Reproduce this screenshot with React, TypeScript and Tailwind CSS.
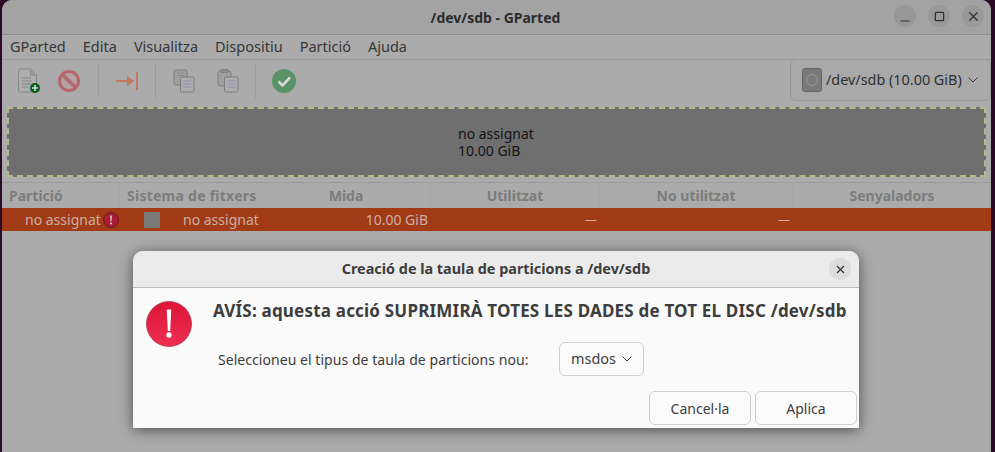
import { Minus, Square, X } from 'lucide-react'

const menus = ['GParted', 'Edita', 'Visualitza', 'Dispositiu', 'Partició', 'Ajuda']

function Chevron({ width = 10, height = 5 }: { width?: number; height?: number }) {
  return (
    <svg width={width} height={height + 1} viewBox={`0 0 ${width} ${height + 1}`} fill="none" className="shrink-0">
      <path d={`M0.5 0.5L${width / 2} ${height}L${width - 0.5} 0.5`} stroke="#3a3a3a" strokeWidth="1" />
    </svg>
  )
}

function NewIcon() {
  return (
    <svg width="24" height="26" viewBox="0 0 24 26" fill="none">
      <path d="M1.5 3a2 2 0 0 1 2-2h10l6 6v15a2 2 0 0 1-2 2h-14a2 2 0 0 1-2-2z" fill="#adadad" stroke="#858585" />
      <path d="M13.5 1v6h6" fill="#9a9a9a" stroke="#858585" />
      <path d="M5 10h9M5 13h9M5 16h9M5 19h6" stroke="#858585" />
      <circle cx="18" cy="20" r="5" fill="#0a5a1e" />
      <path d="M18 17v6M15 20h6" stroke="#d8d8d8" strokeWidth="1.6" />
    </svg>
  )
}

function CopyIcon({ clip }: { clip?: boolean }) {
  return (
    <svg width="22" height="24" viewBox="0 0 22 24" fill="none">
      <rect x="1" y={clip ? 2 : 1} width="13" height="15" rx="2" fill="#a0a0a0" stroke="#7d7d7d" />
      {clip && <rect x="4" y="0.5" width="7" height="3" rx="1" fill="#8a8a8a" stroke="#7d7d7d" />}
      {!clip && <path d="M4 4h7M4 6.5h7" stroke="#8a8a8a" />}
      <rect x="7.5" y="8" width="13.5" height="15" rx="1.5" fill="#adadad" stroke="#7d7d7d" />
      <path d="M10.5 12h8M10.5 15h8M10.5 18h8" stroke="#8f8fb0" />
    </svg>
  )
}

function ToolbarIcons() {
  return (
    <div className="flex items-center h-full pb-[5px]">
      <div className="ml-[15px] w-[24px] flex"><NewIcon /></div>
      <div className="ml-[16px] flex">
        <svg width="24" height="24" viewBox="0 0 24 24" fill="none">
          <circle cx="12" cy="12" r="9.5" stroke="#b5656b" strokeWidth="3" fill="#b3a3a3" />
          <path d="M5.5 5.5l13 13" stroke="#b5656b" strokeWidth="3.4" />
        </svg>
      </div>
      <div className="ml-[17px] w-px h-[34px] bg-[#9c9c9c]" />
      <div className="ml-[17px] flex">
        <svg width="24" height="20" viewBox="0 0 24 20" fill="none">
          <path d="M0 10h17" stroke="#c07a5e" strokeWidth="2" />
          <path d="M11 4.5l7 5.5-7 5.5z" fill="#c07a5e" />
          <path d="M21 1v18" stroke="#c07a5e" strokeWidth="2" />
        </svg>
      </div>
      <div className="ml-[15px] w-px h-[34px] bg-[#9c9c9c]" />
      <div className="ml-[17px] flex"><CopyIcon /></div>
      <div className="ml-[22px] flex"><CopyIcon clip /></div>
      <div className="ml-[16px] w-px h-[34px] bg-[#9c9c9c]" />
      <div className="ml-[16px] flex">
        <svg width="24" height="24" viewBox="0 0 24 24" fill="none">
          <circle cx="12" cy="12" r="12" fill="#5a9268" />
          <path d="M6.5 12.5l4 4 7.5-8" stroke="#d6d6d6" strokeWidth="2.6" />
        </svg>
      </div>
    </div>
  )
}

function ErrorBadge() {
  return (
    <svg width="46" height="46" viewBox="0 0 46 46" className="shrink-0">
      <defs>
        <linearGradient id="err" x1="0" y1="0" x2="0" y2="1">
          <stop offset="0" stopColor="#dc1536" />
          <stop offset="1" stopColor="#ee2f52" />
        </linearGradient>
      </defs>
      <circle cx="23" cy="23" r="22.5" fill="url(#err)" stroke="#a8384c" strokeWidth="0.8" />
      <path d="M20.8 9.5a1 1 0 0 1 1-1h2.4a1 1 0 0 1 1 1l-1 20.5h-2.4z" fill="#fff" />
      <circle cx="23" cy="34" r="2.7" fill="#fff" />
    </svg>
  )
}

export default function App() {
  return (
    <div className="relative w-[995px] h-[452px] overflow-hidden bg-[#2a0a24] pl-[2px] pr-[4px] font-['Noto_Sans',sans-serif] text-[14px] text-[#2f2f2f]">
      <div className="h-full flex flex-col bg-[#ababab] rounded-t-[10px] overflow-hidden">
        {/* Title bar */}
        <div className="relative h-[35px] shrink-0 flex items-center justify-center bg-[#a3a3a3] border-b border-[#8c8c8c]">
          <span className="font-bold text-[#2b2b2b] text-[14px] ml-[-2px]">/dev/sdb - GParted</span>
          <div className="absolute right-[7px] top-[5px] flex gap-[12px]">
            <div className="w-[22px] h-[22px] rounded-full bg-[#989898] flex items-center justify-center pt-[9px]"><Minus size={14} strokeWidth={2} /></div>
            <div className="w-[22px] h-[22px] rounded-full bg-[#989898] flex items-center justify-center"><Square size={11} strokeWidth={2.7} /></div>
            <div className="w-[22px] h-[22px] rounded-full bg-[#989898] flex items-center justify-center"><X size={15} strokeWidth={2} /></div>
          </div>
        </div>
        {/* Menu */}
        <div className="h-[25px] shrink-0 flex items-center gap-[17px] pl-[8px] border-b border-[#9b9b9b] bg-[#ababab] text-[14.5px]">
          {menus.map(m => <span key={m} className="text-[#363636]">{m}</span>)}
        </div>
        {/* Toolbar */}
        <div className="h-[47px] shrink-0 flex justify-between bg-[#ababab]">
          <ToolbarIcons />
          <div className="w-[201px] h-[42px] mt-[-1px] flex items-center pl-[11px] border border-[#999] rounded-[6px] bg-[#a9a9a9]">
            <div className="w-[20px] h-[24px] rounded-[3px] bg-[#7a7a7a] border border-[#666] flex items-center justify-center">
              <div className="w-[12px] h-[12px] rounded-full border border-[#9a9a9a]" />
            </div>
            <span className="ml-[4px] text-[#2f2f2f] text-[14.4px] whitespace-nowrap">/dev/sdb (10.00 GiB)</span>
            <span className="ml-[6px] flex"><Chevron /></span>
          </div>
        </div>
        {/* Disk map */}
        <div className="mx-[5px] h-[70px] shrink-0 bg-[#6f6f6f] border-2 border-dashed border-[#b8b88a] flex flex-col justify-center pl-[449px] text-[#141414] leading-[17px]">
          <span>no assignat</span>
          <span>10.00 GiB</span>
        </div>
        {/* Table header */}
        <div className="h-[26px] mt-[5px] shrink-0 grid grid-cols-[118px_142px_169px_169px_193px_1fr] border-t border-[#9a9a9a] font-bold text-[#7c7c7c] text-[14px]">
          <span className="pl-[7px] flex items-center border-r border-[#a7a7a7]">Partició</span>
          <span className="pl-[7px] flex items-center whitespace-nowrap tracking-[0.25px] border-r border-[#a7a7a7]">Sistema de fitxers</span>
          <span className="flex items-center justify-center border-r border-[#a7a7a7]">Mida</span>
          <span className="flex items-center justify-center border-r border-[#a7a7a7]">Utilitzat</span>
          <span className="flex items-center justify-center border-r border-[#a7a7a7]">No utilitzat</span>
          <span className="flex items-center justify-center">Senyaladors</span>
        </div>
        {/* Selected row */}
        <div className="h-[23px] shrink-0 grid grid-cols-[118px_142px_169px_169px_193px_1fr] items-center bg-[#a33a16] text-[#c6b0a6]">
          <span className="pl-[23px] flex items-center gap-[2px] whitespace-nowrap">
            no assignat
            <svg width="16" height="16" viewBox="0 0 16 16" className="shrink-0">
              <circle cx="8" cy="8" r="7.5" fill="#a81c38" stroke="#6a1a20" />
              <path d="M7 3.5h2l-.4 6h-1.2z" fill="#d8c0c0" />
              <circle cx="8" cy="11.5" r="1.1" fill="#d8c0c0" />
            </svg>
          </span>
          <span className="flex items-center whitespace-nowrap">
            <span className="ml-[24px] w-[16px] h-[16px] bg-[#7a7a7a]" />
            <span className="ml-[23px]">no assignat</span>
          </span>
          <span className="text-right pr-[3px]">10.00 GiB</span>
          <span className="text-right pr-[3px] text-[12px]">—</span>
          <span className="text-right pr-[3px] text-[12px]">—</span>
          <span />
        </div>
        <div className="flex-1" />
      </div>

      {/* Dialog */}
      <div className="absolute left-[133px] top-[251px] w-[726px] h-[177px] flex flex-col rounded-t-[10px] bg-[#fafafa] shadow-[0_2px_14px_rgba(0,0,0,0.55)] overflow-hidden">
        <div className="relative h-[37px] shrink-0 flex items-center justify-center bg-[#ebebeb] border-b border-[#bdbdbd]">
          <span className="font-bold text-[#3d3d3d] text-[14.4px]">Creació de la taula de particions a /dev/sdb</span>
          <div className="absolute right-[8px] top-[7px] w-[22px] h-[22px] rounded-full bg-[#dcdcdc] flex items-center justify-center">
            <X size={13} strokeWidth={2} />
          </div>
        </div>
        <div className="flex pl-[13px] pt-[13px]">
          <ErrorBadge />
          <div className="ml-[21px] flex flex-col">
            <span className="font-bold text-[17px] tracking-[0.2px] leading-[22px] text-[#3d3d3d] mt-[-1px] whitespace-nowrap">AVÍS: aquesta acció SUPRIMIRÀ TOTES LES DADES de TOT EL DISC /dev/sdb</span>
            <div className="flex items-center mt-[20px] ml-[5px] text-[#3d3d3d]">
              <span className="w-[341px] tracking-[0.05px] whitespace-nowrap">Seleccioneu el tipus de taula de particions nou:</span>
              <div className="w-[85px] h-[34px] flex items-center justify-center gap-[6px] border border-[#cfcfcf] rounded-[6px] bg-[#fbfbfb] text-[14.4px]">
                msdos <Chevron />
              </div>
            </div>
          </div>
        </div>
        <div className="flex justify-end gap-[4px] pr-[2px] mt-[15px]">
          <button className="w-[102px] h-[34px] border border-[#cfcfcf] rounded-[6px] bg-[#fbfbfb] text-[#3d3d3d]">Cancel·la</button>
          <button className="w-[102px] h-[34px] border border-[#cfcfcf] rounded-[6px] bg-[#fbfbfb] text-[#3d3d3d]">Aplica</button>
        </div>
      </div>
    </div>
  )
}
